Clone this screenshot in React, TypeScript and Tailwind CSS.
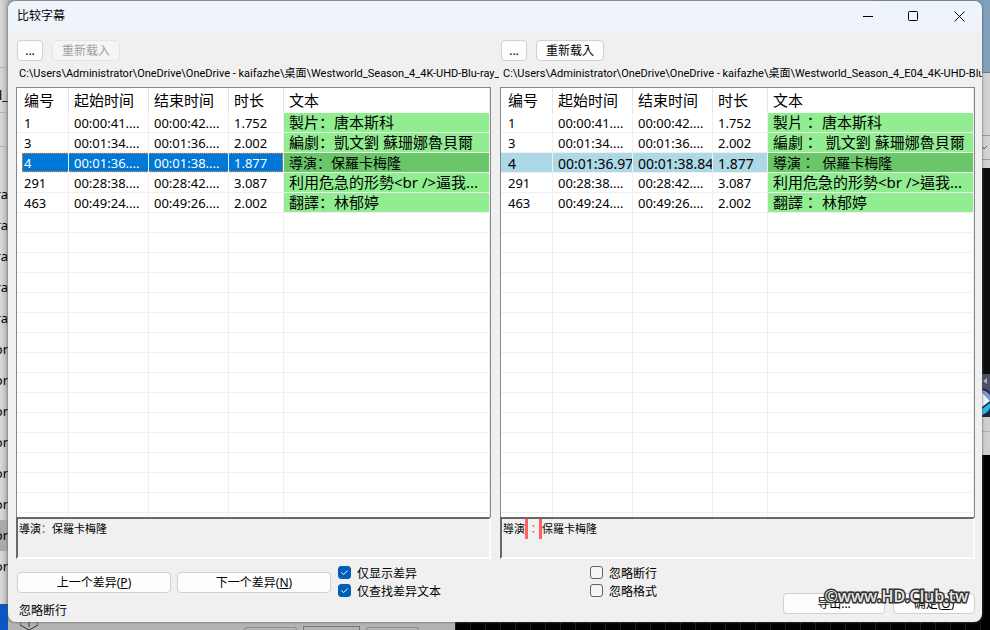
import { useId } from 'react';

const CJK_SC = "font-['Noto_Sans','Noto_Sans_CJK_SC',sans-serif]";
const CJK_TC = "font-['Noto_Sans','Noto_Sans_CJK_TC',sans-serif]";

type Row = {
  no: string;
  start: string;
  end: string;
  duration: string;
  text: string;
};

const leftRows: Row[] = [
  { no: '1', start: '00:00:41....', end: '00:00:42....', duration: '1.752', text: '製片：唐本斯科' },
  { no: '3', start: '00:01:34....', end: '00:01:36....', duration: '2.002', text: '編劇：凱文劉 蘇珊娜魯貝爾' },
  { no: '4', start: '00:01:36....', end: '00:01:38....', duration: '1.877', text: '導演：保羅卡梅隆' },
  { no: '291', start: '00:28:38....', end: '00:28:42....', duration: '3.087', text: '利用危急的形勢<br />逼我...' },
  { no: '463', start: '00:49:24....', end: '00:49:26....', duration: '2.002', text: '翻譯：林郁婷' },
];

const rightRows: Row[] = [
  { no: '1', start: '00:00:41....', end: '00:00:42....', duration: '1.752', text: '製片： 唐本斯科' },
  { no: '3', start: '00:01:34....', end: '00:01:36....', duration: '2.002', text: '編劇：\u00a0 凱文劉 蘇珊娜魯貝爾' },
  { no: '4', start: '00:01:36.970', end: '00:01:38.847', duration: '1.877', text: '導演：\u00a0 保羅卡梅隆' },
  { no: '291', start: '00:28:38....', end: '00:28:42....', duration: '3.087', text: '利用危急的形勢<br />逼我...' },
  { no: '463', start: '00:49:24....', end: '00:49:26....', duration: '2.002', text: '翻譯： 林郁婷' },
];

const headers = ['编号', '起始时间', '结束时间', '时长', '文本'];
const emptyRows = Array.from({ length: 16 }, (_, i) => i);

function Button({ children, className = '', disabled = false }: { children: React.ReactNode; className?: string; disabled?: boolean }) {
  return (
    <button
      type="button"
      disabled={disabled}
      className={`h-[21px] shrink-0 rounded border border-[#d0d0d0] bg-[#fdfdfd] text-xs leading-[20px] whitespace-nowrap text-black disabled:border-[#e6e6e6] disabled:bg-[#f5f5f5] disabled:text-[#a0a0a0] ${className}`}
    >
      {children}
    </button>
  );
}

function CheckBox({ label, checked = false }: { label: string; checked?: boolean }) {
  const id = useId();
  return (
    <div className="flex h-[18px] items-start gap-1.5">
      <span className="relative size-[13px] shrink-0">
        <input
          id={id}
          type="checkbox"
          defaultChecked={checked}
          className="peer block size-[13px] appearance-none rounded-[3px] border border-[#626262] bg-[#f5f5f5] checked:border-[#005fb8] checked:bg-[#005fb8]"
        />
        <svg viewBox="0 0 13 13" className="pointer-events-none absolute inset-0 hidden size-[13px] peer-checked:block">
          <path d="M3.5 6.5 5.6 8.6 9.6 4.6" fill="none" stroke="#fff" strokeWidth="1" />
        </svg>
      </span>
      <label htmlFor={id} className="text-xs leading-[15px] whitespace-nowrap">{label}</label>
    </div>
  );
}

function SubtitleTable({ rows, focused }: { rows: Row[]; focused: boolean }) {
  const td = 'h-[20px] border-r border-b border-[#f0f0f0] p-0';
  return (
    <table className="w-full table-fixed border-separate border-spacing-0">
      <colgroup>
        <col className="w-[52px]" />
        <col className="w-[80px]" />
        <col className="w-[80px]" />
        <col className="w-[55px]" />
        <col />
      </colgroup>
      <thead>
        <tr className="h-[25px]">
          {headers.map((h, i) => (
            <th key={h} className={`border-r border-[#e5e5e5] p-0 text-left text-[15px] leading-[25px] font-normal whitespace-nowrap ${i === 0 ? 'pl-[7px]' : 'pl-[5px]'}`}>
              {h}
            </th>
          ))}
        </tr>
      </thead>
      <tbody>
        {rows.map((row) => {
          const selected = row.no === '4';
          const active = selected && focused;
          const tone = selected ? 'bg-[#add8e6] text-sm' : 'text-[13px]';
          const focus = 'h-[19px] overflow-hidden border-y border-dotted border-[#ff8728] bg-[#0078d7] text-[13px] leading-[19px] whitespace-nowrap text-white';
          const plain = `h-[19px] overflow-hidden leading-[21px] whitespace-nowrap ${tone}`;
          return (
            <tr key={row.no}>
              <td className={`${td} ${active ? 'pl-[5px]' : ''}`}>
                <div className={active ? `${focus} border-l pl-px` : `${plain} pl-[7px]`}>{row.no}</div>
              </td>
              {[row.start, row.end, row.duration].map((v, i) => (
                <td key={i} className={td}>
                  <div className={`pl-[5px] ${active ? focus : plain} ${active && i === 2 ? 'border-r' : ''}`}>{v}</div>
                </td>
              ))}
              <td className={`${td} ${selected ? 'bg-[#69c669] text-sm' : 'bg-[#90ee90] text-[15px]'}`}>
                <div className="h-[19px] overflow-hidden pl-[5px] leading-[19px] whitespace-nowrap">{row.text}</div>
              </td>
            </tr>
          );
        })}
        {emptyRows.map((n) => (
          <tr key={n}>
            {headers.map((h) => (
              <td key={h} className={td} />
            ))}
          </tr>
        ))}
      </tbody>
    </table>
  );
}

type PanelProps = {
  path: string;
  rows: Row[];
  focused?: boolean;
  reloadDisabled?: boolean;
  preview: React.ReactNode;
  className?: string;
};

function Panel({ path, rows, focused = false, reloadDisabled = false, preview, className = '' }: PanelProps) {
  return (
    <section className={`flex min-w-0 flex-col ${className}`}>
      <div className="flex gap-[9px] pl-px">
        <Button className="w-[26px]">...</Button>
        <Button className="w-[68px]" disabled={reloadDisabled}>重新载入</Button>
      </div>
      <p className="-mr-2 mt-1 h-[22px] overflow-hidden pl-[3px] font-['Roboto','Noto_Sans_CJK_SC',sans-serif] text-[11px] leading-[18px] whitespace-nowrap">{path}</p>
      <div className="h-0 grow overflow-hidden border border-b-0 border-[#828790] bg-white">
        <SubtitleTable rows={rows} focused={focused} />
      </div>
      <div className="h-[42px] border-2 border-t-[#696969] border-r-white border-b-white border-l-[#696969] pl-px text-[11px] leading-[20px]">
        {preview}
      </div>
    </section>
  );
}

function Desktop() {
  return (
    <div className="absolute inset-0 flex flex-col bg-[#a8a8a8]" aria-hidden="true">
      <div className="flex grow justify-between">
        <div className="flex w-2 flex-col overflow-hidden bg-linear-to-r from-[#dcdcdc] to-[#b4b4b4] text-[13px]">
          <div className="h-[67px]" />
          <div className="h-[12px] border-t border-[#b0b0b0]" />
          <div className="h-[34px] border-b border-[#b0b0b0] leading-[33px]">
            <span className="flex justify-end">d_</span>
          </div>
          <div className="h-[34px] border-b border-[#b0b0b0]" />
          <div className="h-[32px]" />
          {['ra', 'ra', 'ra', 'ra', 'ra', 'or', 'or', 'or', 'or', 'or', 'or', 'or', 'or'].map((t, i) => (
            <div key={i} className={`flex h-[31px] justify-end leading-[31px] ${i === 11 ? 'bg-[#a9a9a9]' : ''}`}>{t}</div>
          ))}
          <div className="grow" />
          <div className="h-[18px] bg-[#0a56c2]" />
        </div>
        <div className="flex w-[114px] flex-col bg-black">
          <div className="h-[72px] bg-[#7f9fbb]" />
          <div className="flex h-24 flex-col items-end border-t border-[#777] bg-[#d2d2d2]">
            <div className="mt-[62px] h-[25px] w-full border-y border-[#999]">
              <svg viewBox="0 0 8 23" className="ml-auto h-[23px] w-2">
                <path d="M0 11l2 2 3-3" fill="none" stroke="#555" />
              </svg>
            </div>
          </div>
          <div className="h-[206px] bg-[#0e0e0e]" />
          <div className="flex h-[43px] justify-end bg-[#4b5063]">
            <svg viewBox="0 0 8 43" className="h-[43px] w-2">
              <path d="M1 7 5 4v6z" fill="#a9afc2" />
              <path d="M0 14q6 1 8 5v24H0z" fill="#1b2540" />
              <path d="M0 16q5 1 8 5v6L0 20z" fill="#7f97d8" />
              <path d="M0 41q6-2 8-7v-5l-8 6z" fill="#2bb7ee" />
              <path d="M0 19 8 27 0 33z" fill="#f1f4fa" />
            </svg>
          </div>
          <div className="h-[38px] bg-[#cfcfcf] pt-3.5">
            <div className="border-t border-[#b0b0b0]" />
          </div>
        </div>
      </div>
      <div className="flex h-2">
        <div className="w-2 bg-[#0a56c2]" />
        <div className="flex w-[447px] items-end justify-end gap-1.5 bg-[#b4b4b4] pr-9">
          <svg viewBox="0 0 18 8" className="mr-auto ml-3 h-2 w-[18px]">
            <path d="M0 0v3l9 5 9-5V0M9 0v5" fill="none" stroke="#333" />
          </svg>
          <div className="h-[3px] w-[53px] rounded-t border border-b-0 border-[#8f8f8f]" />
          <div className="h-1 w-[57px] border border-b-0 border-[#777]" />
          <div className="h-[3px] w-[53px] rounded-t border border-b-0 border-[#8f8f8f]" />
        </div>
        <div className="grow bg-black bg-[linear-gradient(to_right,#1c1c1c_1px,transparent_1px)] bg-[size:15px_15px]" />
      </div>
    </div>
  );
}

export default function App() {
  return (
    <div className={`relative h-screen overflow-hidden text-black ${CJK_SC}`}>
      <Desktop />
      <div className="relative flex h-full pt-px pr-2 pb-2 pl-2">
        <main className="flex min-w-0 flex-1 flex-col overflow-hidden rounded-lg bg-[#f0f0f0] shadow-[0_0_3px_#555]">
          <header className="flex h-[30px] shrink-0 items-center justify-between bg-[#eff4fb] pl-[9px]">
            <h1 className="text-xs leading-[28px]">比较字幕</h1>
            <div className="flex">
              <button type="button" aria-label="最小化" className="flex h-7 w-[45px] items-center justify-center">
                <svg viewBox="0 0 11 11" className="size-[11px]"><path d="M0 5.5h10" stroke="#000" /></svg>
              </button>
              <button type="button" aria-label="最大化" className="flex h-7 w-[45px] items-center justify-center">
                <svg viewBox="0 0 11 11" className="size-[11px]"><rect x=".5" y=".5" width="9" height="9" rx="1" fill="none" stroke="#000" /></svg>
              </button>
              <button type="button" aria-label="关闭" className="flex h-7 w-[46px] items-center justify-center">
                <svg viewBox="0 0 11 11" className="size-[11px]"><path d="M.5.5l10 10M10.5.5l-10 10" stroke="#000" /></svg>
              </button>
            </div>
          </header>

          <div className="grid grow grid-cols-2 gap-[9px] pt-[9px] pr-[7px] pl-2">
            <Panel
              path="C:\Users\Administrator\OneDrive\OneDrive - kaifazhe\桌面\Westworld_Season_4_4K-UHD-Blu-ray_"
              rows={leftRows}
              focused
              reloadDisabled
              preview={<>導演<span className="text-red-500">：</span>保羅卡梅隆</>}
            />
            <Panel
              className={CJK_TC}
              path="C:\Users\Administrator\OneDrive\OneDrive - kaifazhe\桌面\Westworld_Season_4_E04_4K-UHD-Blu"
              rows={rightRows}
              preview={
                <span className="flex">
                  導演
                  <span className="border-x-[3px] border-[#ff5f5f] text-red-500">：</span>
                  保羅卡梅隆
                </span>
              }
            />
          </div>

          <footer className="grid h-[63px] shrink-0 grid-cols-2 gap-[9px] pr-[7px] pl-2">
            <div className="min-w-0 pt-[7px] pl-px">
              <div className="flex gap-1.5">
                <Button className="mt-1.5 w-[154px]">上一个差异(<u>P</u>)</Button>
                <Button className="mt-1.5 w-[154px]">下一个差异(<u>N</u>)</Button>
                <div className="pl-px">
                  <CheckBox label="仅显示差异" checked />
                  <CheckBox label="仅查找差异文本" checked />
                </div>
              </div>
              <p className="pl-0.5 text-xs leading-[18px]">忽略断行</p>
            </div>
            <div className="flex min-w-0 justify-between pt-[7px] pl-[90px]">
              <div>
                <CheckBox label="忽略断行" />
                <CheckBox label="忽略格式" />
              </div>
              <div className="flex items-end gap-2 pb-2">
                <Button className="w-[102px]">导出...</Button>
                <Button className="w-[82px]">确定(<u>O</u>)</Button>
              </div>
            </div>
          </footer>
        </main>
        <span className="pointer-events-none absolute right-[22px] bottom-[22px] font-['Open_Sans',sans-serif] text-base leading-6 font-semibold text-[#e8e8e8] [-webkit-text-stroke:3px_#333] [paint-order:stroke_fill]">
          ©www.HD.Club.tw
        </span>
      </div>
    </div>
  );
}
